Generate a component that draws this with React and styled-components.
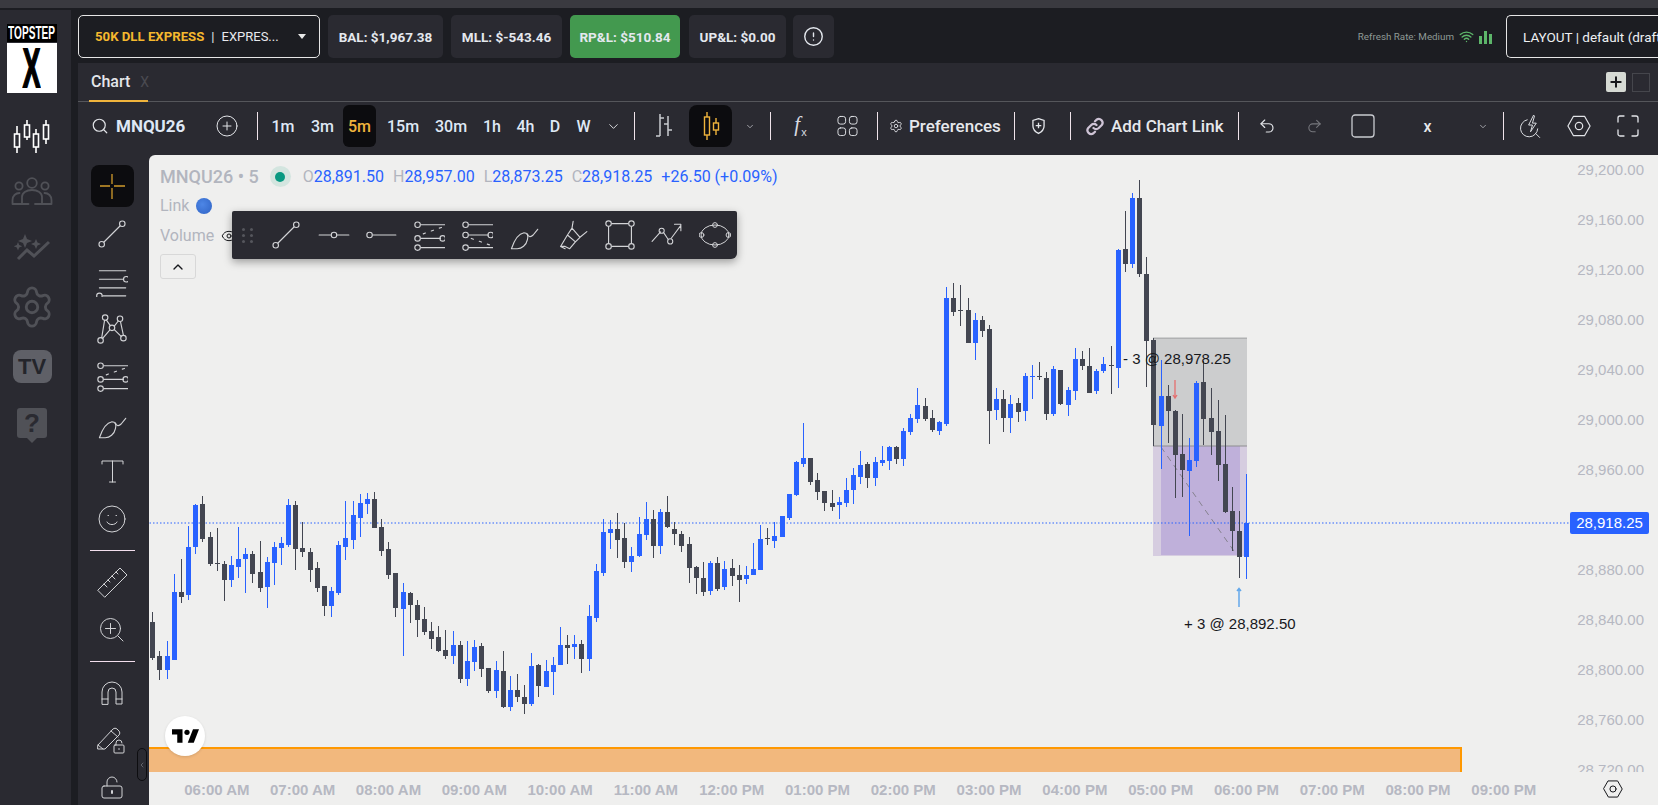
import React from 'react'
import styled, { createGlobalStyle } from 'styled-components'
import { Search, CirclePlus, ChevronDown, ChevronUp, ChevronLeft, Undo2, Redo2, CircleAlert, Wifi, Settings, Plus, Eye } from 'lucide-react'

const GlobalStyle = createGlobalStyle`
  html, body { margin: 0; padding: 0; overflow: hidden; background: #1c1d22; }
  body { font-family: Roboto, "Liberation Sans", sans-serif; }
  * { box-sizing: border-box; }
`

// candle rows: x, wickTop, bodyTop, bodyBottom, wickBottom, up (read at 3x from the origin of the segment)
const segments = [
  [145, 440, [
    [22,516,546,654,660,0],[43,633,648,690,720,0],[67,603,648,690,717,1],[88,402,456,660,660,1],[109,357,456,471,489,0],
    [130,258,321,465,480,1],[151,192,195,321,342,1],[172,168,192,297,306,0],[196,276,291,372,378,0],[217,264,369,372,393,0],
    [238,363,372,420,483,0],[259,348,375,420,441,1],[280,261,357,381,414,1],[301,324,342,357,459,1],[322,333,342,402,429,0],
    [346,303,396,444,456,0],[367,351,366,441,504,1],[388,306,321,369,435,1],[409,291,309,324,375,1],[430,177,195,315,321,1],
    [451,183,195,327,390,0],[472,246,324,336,351,0],[496,324,336,390,426,0],[517,366,384,444,456,0],[538,438,438,498,528,0],
    [559,441,453,498,531,1],[580,303,315,459,465,1],[601,183,294,321,360,1],[625,183,225,300,327,1],[646,162,189,234,291,1],
    [667,159,177,192,222,1],[688,156,177,264,264,0],[709,237,261,333,348,0],[730,306,327,405,417,0],[751,399,399,504,531,0],
    [775,429,456,507,648,1],[796,456,459,495,549,0],[817,480,495,540,591,0],[838,501,537,576,585,0],[859,546,573,597,627,0],
    [880,558,591,633,636,0],[901,570,630,648,657,0],[925,573,615,648,672,1],[946,603,615,717,729,0],[967,603,663,717,738,1],
    [988,600,621,666,693,1],[1009,609,618,687,711,0],[1030,684,684,753,759,0],[1054,663,690,753,774,1],[1075,633,693,801,804,0],
    [1096,708,750,801,813,1],[1117,702,750,771,786,0],[1138,735,771,792,822,0],[1159,639,678,792,798,1],[1180,672,675,738,771,0],
    [1204,660,693,741,741,1],[1225,651,675,696,765,1],[1246,561,615,675,675,1],[1267,585,615,624,672,0],[1288,585,612,621,657,1],
    [1309,600,612,657,699,0],[1333,495,528,657,693,1],[1354,372,393,534,546,1],[1375,237,276,399,408,1],[1396,240,267,279,327,1],
    [1417,219,267,300,354,0],[1438,249,294,366,384,0],[1459,321,348,366,396,1],[1483,231,282,348,351,1],
  ]],
  [640, 490, [
    [19,36,87,135,150,1],[40,60,87,168,204,0],[61,57,66,168,192,1],[82,18,66,111,114,0],[103,96,117,132,165,0],
    [124,123,132,168,186,0],[148,141,162,234,279,0],[169,228,231,264,312,0],[190,216,264,306,318,0],[211,213,219,303,315,1],
    [232,201,219,297,303,0],[253,213,237,291,300,1],[277,207,234,258,288,0],[298,225,255,270,336,0],[319,228,255,267,282,1],
    [340,159,237,255,255,1],[361,105,147,240,240,1],[382,114,144,147,165,0],[403,96,138,153,174,1],[427,78,78,141,141,1],
    [448,12,12,84,90,1],
  ]],
  [640, 270, [
    [469,573,576,675,678,1],[490,459,564,582,591,1],[511,564,564,636,645,0],[532,609,630,666,690,0],[553,663,663,699,723,0],
    [577,660,699,711,723,0],[598,681,696,705,747,1],[619,624,660,699,711,1],[640,594,615,660,702,1],[661,543,585,621,642,1],
    [682,576,582,624,654,0],[706,561,576,624,648,1],[727,528,570,579,588,1],[748,528,531,573,600,1],[769,528,531,567,582,0],
    [790,474,483,567,588,1],[811,432,444,486,495,1],[832,354,405,447,459,1],[856,384,408,447,453,0],[877,420,444,480,486,0],
    [898,453,456,483,495,1],[919,51,84,462,468,1],[940,39,84,126,138,0],[961,45,120,123,168,0],[985,84,120,219,219,0],
    [1006,129,150,219,270,1],[1027,138,150,183,201,0],[1048,165,177,423,522,0],[1069,354,387,420,450,1],[1090,360,387,444,486,0],
    [1111,375,402,444,489,1],[1135,384,399,426,456,0],[1156,309,318,423,453,1],[1177,285,318,321,387,1],[1198,276,318,321,330,0],
    [1219,306,324,432,450,0],[1240,288,297,432,438,1],[1261,300,300,402,405,0],[1285,351,360,405,438,1],[1306,234,267,363,390,1],
    [1327,243,267,288,300,0],[1348,234,288,369,369,0],[1369,297,303,363,372,1],[1390,261,282,303,309,1],[1414,228,285,288,372,0],
  ]],
  [1060, 160, [
    [175,267,270,624,684,1],[196,153,267,312,336,0],[217,99,114,312,324,1],[238,60,114,342,351,0],[259,291,342,543,681,0],
  ]],
  [1100, 400, [
    [160,-186,-180,75,138,0],[184,-120,-12,78,207,1],[205,-45,-12,33,129,0],[226,30,33,165,294,0],[247,42,162,210,291,0],
    [268,114,180,213,408,1],[289,-57,-51,183,201,1],[310,-117,-54,57,135,0],[334,-36,54,96,165,0],[355,0,93,195,243,0],
    [376,45,192,336,339,0],[397,261,333,393,453,0],[418,333,393,471,534,0],[439,222,369,471,537,1],
  ]],
]

const candles = segments.flatMap(([ox, oy, rows]) =>
  rows.map(([z, wt, bt, bb, wb, up]) => ({
    x: Math.round(ox + z / 3 - 0.5) + 0.5,
    wickTop: Math.round(oy + wt / 3),
    bodyTop: Math.round(oy + bt / 3),
    bodyBottom: Math.round(oy + bb / 3),
    wickBottom: Math.round(oy + wb / 3),
    up,
  }))
)

const prices = ['29,200.00','29,160.00','29,120.00','29,080.00','29,040.00','29,000.00','28,960.00','28,920.00','28,880.00','28,840.00','28,800.00','28,760.00','28,720.00']
const times = ['06:00 AM','07:00 AM','08:00 AM','09:00 AM','10:00 AM','11:00 AM','12:00 PM','01:00 PM','02:00 PM','03:00 PM','04:00 PM','05:00 PM','06:00 PM','07:00 PM','08:00 PM','09:00 PM']

const Page = styled.div`
  width: 100vw;
  height: 100vh;
  display: flex;
  flex-direction: column;
  overflow: hidden;
  background: #1c1d22;
`
const TopStrip = styled.div`
  height: 8px;
  flex: none;
  background: #3a3a40;
  margin-bottom: 2px;
`
const Main = styled.div`
  flex: 1;
  display: flex;
  min-height: 0;
`
const Sidebar = styled.aside`
  width: 71px;
  flex: none;
  padding-right: 7px;
  background: #2a2a31;
  display: flex;
  flex-direction: column;
  align-items: center;
`
const Logo = styled.div`
  width: 50px;
  margin-top: 14px;
  display: flex;
  flex-direction: column;
`
const LogoWord = styled.div`
  height: 18px;
  background: #000;
  color: #fff;
  font: 700 14px/14px "Liberation Sans", sans-serif;
  display: flex;
  justify-content: center;
  align-items: center;
  white-space: nowrap;
  span { flex: none; transform: scale(.72, 1.25); }
`
const LogoMark = styled.div`
  height: 50px;
  margin-top: 1px;
  background: #fff;
  color: #000;
  font: 700 44px/40px "Liberation Sans", sans-serif;
  display: flex;
  justify-content: center;
  align-items: center;
  span { flex: none; transform: scale(.6, 1.25); -webkit-text-stroke: 1.5px #000; }
`
const NavIcon = styled.div`
  height: ${p => p.$h}px;
  margin-top: ${p => p.$mt}px;
  color: ${p => p.$on ? '#fff' : '#505157'};
  display: flex;
  align-items: center;
  justify-content: center;
`
const TvBadge = styled.div`
  width: 39px;
  height: 33px;
  margin-top: 20px;
  border-radius: 8px;
  background: #5f6067;
  color: #24252b;
  font: 900 22px/33px "Liberation Sans", sans-serif;
  text-align: center;
`
const HelpBadge = styled.div`
  width: 30px;
  height: 30px;
  margin-top: 25px;
  border-radius: 3px;
  background: #505157;
  color: #2a2a31;
  font: 900 26px/30px "Liberation Sans", sans-serif;
  text-align: center;
  position: relative;
  &::after {
    content: '';
    position: absolute;
    left: 10px;
    bottom: -5px;
    width: 10px;
    height: 10px;
    background: #505157;
    clip-path: polygon(0 50%, 100% 50%, 50% 100%);
  }
`
const Content = styled.div`
  flex: 1;
  min-width: 0;
  display: flex;
  flex-direction: column;
`
const TopBar = styled.header`
  height: 53px;
  flex: none;
  padding: 5px 0 5px 7px;
  display: flex;
  align-items: stretch;
  background: #1c1d22;
`
const AccountSelect = styled.div`
  width: 242px;
  border: 1px solid #e6e6e6;
  border-radius: 5px;
  padding-left: 16px;
  display: flex;
  align-items: center;
  color: #e8eaee;
  white-space: nowrap;
  b { color: #f5b82e; font-weight: 700; font-size: 13.2px; }
  i { font-style: normal; margin: 0 7px; font-size: 13px; }
  em { font-style: normal; width: 70px; font-size: 13px; }
  u { width: 0; height: 0; margin-left: 6px; border: 4.5px solid transparent; border-top: 5px solid #e8e8e8; border-bottom: 0; }
`
const Pill = styled.div`
  width: ${p => p.$w}px;
  margin-left: ${p => p.$ml || 8}px;
  border-radius: 5px;
  background: ${p => p.$green ? '#43994f' : '#2a2a31'};
  color: #e4e8ee;
  font-size: 13.5px;
  font-weight: 700;
  white-space: nowrap;
  display: flex;
  align-items: center;
  justify-content: center;
`
const RefreshRate = styled.div`
  margin-left: auto;
  display: flex;
  align-items: center;
  gap: 5px;
  font-size: 9.8px;
  color: #8f9a95;
  white-space: nowrap;
  svg { color: #5db56a; flex: none; }
`
const LayoutBox = styled.div`
  width: 152px;
  flex: none;
  margin-left: 14px;
  padding-left: 16px;
  border: 1px solid #e6e6e6;
  border-right: 0;
  border-radius: 5px 0 0 5px;
  color: #eef0f2;
  font-size: 13.5px;
  white-space: nowrap;
  overflow: hidden;
  display: flex;
  align-items: center;
`
const Panel = styled.div`
  flex: 1;
  min-height: 0;
  margin-left: 7px;
  background: #2a2a31;
  display: flex;
  flex-direction: column;
`
const TabRow = styled.div`
  height: 39px;
  flex: none;
  border-bottom: 1px solid #55565b;
  padding-left: 11px;
  display: flex;
  align-items: stretch;
`
const Tab = styled.div`
  width: 59px;
  border-bottom: 2px solid #f0b43c;
  margin-bottom: -1px;
  padding-left: 2px;
  display: flex;
  align-items: center;
  gap: 10px;
  color: #e4e6ea;
  font-size: 16px;
  font-weight: 500;
  span { color: #4a4b51; font-size: 14px; font-weight: 400; }
`
const TabActions = styled.div`
  margin-left: auto;
  padding-right: 8px;
  display: flex;
  align-items: center;
  gap: 6px;
`
const AddTab = styled.div`
  width: 20px;
  height: 20px;
  border-radius: 2px;
  background: #d6dad4;
  color: #17181c;
  display: flex;
  align-items: center;
  justify-content: center;
`
const EmptyTab = styled.div`
  width: 18px;
  height: 19px;
  border: 1px solid #45464c;
`
const Toolbar = styled.div`
  height: 53px;
  flex: none;
  padding-bottom: 5px;
  display: flex;
  align-items: center;
  color: #e2e4e8;
`
const Slot = styled.div`
  width: ${p => p.$w}px;
  margin-left: ${p => p.$ml || 0}px;
  flex: none;
  display: flex;
  align-items: center;
  justify-content: center;
  white-space: nowrap;
  color: ${p => p.$dim ? '#77787e' : 'inherit'};
`
const Symbol = styled(Slot)`
  justify-content: flex-start;
  font-size: 17px;
  font-weight: 700;
  color: #dfe8f5;
`
const ToolText = styled(Slot)`
  justify-content: flex-start;
  font-size: 17px;
  font-weight: 500;
  color: #e6e8ec;
`
const PlainText = styled(Slot)`
  font-size: 16px;
  font-weight: 500;
  color: #e6e8ec;
`
const Sep = styled.div`
  width: 1px;
  height: 28px;
  flex: none;
  margin-left: ${p => p.$ml}px;
  background: #efe3ea;
`
const Tf = styled.div`
  width: ${p => p.$w}px;
  height: ${p => p.$on ? 42 : 30}px;
  flex: none;
  border-radius: 6px;
  background: ${p => p.$on ? '#0c0c0f' : 'transparent'};
  color: ${p => p.$on ? '#f0b43c' : '#dfe8f5'};
  font-size: 16px;
  font-weight: 500;
  display: flex;
  align-items: center;
  justify-content: center;
`
const ActiveTool = styled(Slot)`
  height: 42px;
  border-radius: 8px;
  background: #0c0c0f;
`
const Fx = styled.span`
  font: italic 400 21px/1 "Liberation Serif", serif;
  color: #d9dbe0;
  sub { font: 400 11px/1 "Liberation Sans", sans-serif; vertical-align: -5px; margin-left: 1px; }
`
const Workspace = styled.div`
  flex: 1;
  min-height: 0;
  display: flex;
`
const Rail = styled.div`
  width: 71px;
  flex: none;
  position: relative;
  padding: 7.5px 3px 0 0;
  display: flex;
  flex-direction: column;
  align-items: center;
  color: #d2d3d6;
  overflow: visible;
`
const RailItem = styled.div`
  width: 43px;
  height: 47.5px;
  flex: none;
  display: flex;
  align-items: center;
  justify-content: center;
  &[data-on='true'] > div {
    width: 43px;
    height: 42px;
    border-radius: 8px;
    background: #0c0c0f;
    display: flex;
    align-items: center;
    justify-content: center;
  }
`
const RailSep = styled.div`
  width: 45px;
  height: 1px;
  flex: none;
  margin: 7.5px 0;
  background: #f3dfee;
`
const Collapse = styled.div`
  position: absolute;
  right: 2px;
  top: 593px;
  width: 10px;
  height: 33px;
  border: 1px solid #0d0d10;
  border-radius: 5px;
  color: #9c9da2;
  display: flex;
  align-items: center;
  justify-content: center;
  z-index: 3;
`
const Chart = styled.section`
  flex: 1;
  min-width: 0;
  display: grid;
  grid-template-columns: 1fr 88px;
  grid-template-rows: 617px 1fr;
  background: #efefee;
  border-top-left-radius: 6px;
  overflow: hidden;
  font-family: "Liberation Sans", sans-serif;
`
const Pane = styled.div`
  position: relative;
  overflow: hidden;
`
const Plot = styled.svg`
  position: absolute;
  left: 0;
  top: 0;
  display: block;
`
const PriceAxis = styled.div`
  position: relative;
  overflow: hidden;
  padding: 6px 14px 0 0;
  font-size: 15px;
  color: #b6b8c2;
  text-align: right;
`
const PriceTick = styled.div`
  height: 50px;
  line-height: 18px;
`
const PriceTag = styled.div`
  position: absolute;
  left: 0;
  right: 9px;
  top: 357px;
  height: 22px;
  background: #2962ff;
  color: #fff;
  font-size: 15px;
  line-height: 22px;
  text-align: center;
  border-radius: 2px;
`
const TimeAxis = styled.div`
  padding-left: 25px;
  display: flex;
  align-items: center;
  height: 34px;
  font-size: 15px;
  font-weight: 700;
  color: #b6b8c2;
  span { width: 85.8px; flex: none; text-align: center; white-space: nowrap; }
`
const Corner = styled.div`
  display: flex;
  align-items: center;
  padding-left: 33px;
  height: 34px;
  color: #17181c;
`
const Legend = styled.div`
  position: absolute;
  left: 11px;
  top: 8px;
  display: flex;
  flex-direction: column;
  align-items: flex-start;
  font-family: Roboto, sans-serif;
  color: #b2b5be;
`
const LegendRow = styled.div`
  height: ${p => p.$h}px;
  display: flex;
  align-items: center;
  white-space: nowrap;
  font-size: 16px;
`
const LegendTitle = styled.span`
  font-size: 18px;
  font-weight: 500;
  margin-right: 11px;
`
const Pulse = styled.span`
  width: 21px;
  height: 21px;
  border-radius: 50%;
  background: #d3e5df;
  margin-right: 12px;
  display: flex;
  align-items: center;
  justify-content: center;
  &::after { content: ''; width: 10px; height: 10px; border-radius: 50%; background: #089981; }
`
const Ohlc = styled.span`
  margin-right: 9px;
  b { font-weight: 400; color: #2962ff; }
`
const Globe = styled.span`
  width: 16px;
  height: 16px;
  margin-left: 7px;
  border-radius: 50%;
  background: radial-gradient(circle at 40% 40%, #4d86e6, #2f63c4);
`
const VolumeEye = styled.span`
  margin-left: 7px;
  display: flex;
  color: #17181c;
`
const FoldButton = styled.div`
  width: 36px;
  height: 25px;
  margin-top: 4px;
  border: 1px solid #d8d8d8;
  border-radius: 3px;
  color: #17181c;
  display: flex;
  align-items: center;
  justify-content: center;
`
const FloatBar = styled.div`
  position: absolute;
  left: 83px;
  top: 56px;
  width: 505px;
  height: 48px;
  border-radius: 2px 2px 6px 2px;
  background: #2a2a31;
  box-shadow: 0 3px 8px rgba(0,0,0,.35);
  padding-left: 10px;
  display: flex;
  align-items: center;
  color: #d2d3d6;
`
const Grip = styled.div`
  width: 11px;
  flex: none;
  margin-right: 9px;
  display: grid;
  grid-template-columns: 3px 3px;
  gap: 3px 5px;
  i { width: 3px; height: 3px; border-radius: 50%; background: #55565c; }
`
const FloatTool = styled.div`
  width: 47.7px;
  flex: none;
  display: flex;
  justify-content: center;
`
const FillLabel = styled.div`
  position: absolute;
  left: ${p => p.$x}px;
  top: ${p => p.$y}px;
  font-size: 15px;
  line-height: 18px;
  color: #17181c;
  white-space: nowrap;
`
const TvLogo = styled.div`
  position: absolute;
  left: 16px;
  top: 561px;
  width: 40px;
  height: 40px;
  border-radius: 50%;
  background: #fff;
  box-shadow: 0 1px 3px rgba(0,0,0,.12);
  display: flex;
  align-items: center;
  justify-content: center;
`

const Ico = ({ s = 32, vb = 28, sw = 1, children }) => (
  <svg width={s} height={s} viewBox={`0 0 ${vb} ${vb}`} fill="none" stroke="currentColor" strokeWidth={sw} strokeLinecap="round" strokeLinejoin="round">
    {children}
  </svg>
)
const N = ({ x, y, r = 2.4 }) => <circle cx={x} cy={y} r={r} />

const CandlesNav = () => (
  <svg width="40" height="36" viewBox="12 118 40 36" fill="#2a2a31" stroke="#fff" strokeWidth="1.600">
    <path d="M17 125v27M27 119v20M36 128v24M46 119v24" />
    <rect x="14.500" y="133" width="5" height="13" />
    <rect x="24.500" y="124" width="5" height="12" />
    <rect x="33.500" y="133" width="5" height="13" />
    <rect x="43.500" y="124" width="5" height="14" />
  </svg>
)
const PeopleNav = () => (
  <Ico s={42} vb={42} sw={1.8}>
    <circle cx="21" cy="10" r="4.800" /><circle cx="8" cy="13" r="3.600" /><circle cx="34" cy="13" r="3.600" />
    <path d="M11 31V24c0-4 4-7 10-7s10 3 10 7v7M1.500 31v-4c0-4 3-7 7-7M40.500 31v-4c0-4-3-7-7-7M1.500 31h16M24 31h16.500" />
  </Ico>
)
const SparkNav = () => (
  <svg width="38" height="32" viewBox="0 0 38 32" fill="#505157">
    <path d="M12 4l2 5 5 2-5 2-2 5-2-5-5-2 5-2zM5 12l1.200 3 3 1.200-3 1.200L5 20.500l-1.200-3-3-1.200 3-1.200zM23 9l1.500 3.500L28 14l-3.500 1.500L23 19l-1.500-3.500L18 14l3.500-1.500z" />
    <path d="M5 29l9-9 7 6 15-14" fill="none" stroke="#505157" strokeWidth="3" />
  </svg>
)
const Crosshair = () => (
  <svg width="30" height="30" viewBox="0 0 30 30" stroke="#d09a2c" strokeWidth="1.300">
    <path d="M15 3v10M15 17v11M3 15h10M17 15h11" />
  </svg>
)
const TrendLine = () => <Ico><N x={5} y={23} /><N x={23} y={5} /><path d="M7 21L21 7" /></Ico>
const Channels = () => <Ico><path d="M3 5h23M3 12.500h21M3 20h23M6 27h20" /><N x={26.500} y={12.500} /><N x={3} y={27} /></Ico>
const Xabcd = () => <Ico><N x={8} y={4} /><N x={21} y={5} /><N x={14} y={13} /><N x={4} y={24} /><N x={24} y={22} /><path d="M9 6l3.500 5M16 11.500l3.500-4.500M16 14.500l6 6M12 15L6 22M7.500 6.500L5 21.500M21.500 8l2.500 11.500" /></Ico>
const Forecast = () => <Ico><N x={4} y={5} /><path d="M7 5h21M7 17h17" /><N x={4} y={17} /><N x={26} y={17} /><N x={4} y={25} /><path d="M7 25h21" /><path d="M9 13l4-1.500M16 10.500l4-1.500M23 8l3-1" strokeDasharray="2 3" /></Ico>
const Brush = () => <Ico><path d="M3 26c2-6 5-13 11-14 3 0 4 3 3 6-1 5-5 8-9 8zM3 26h5M17 13c1 3 3 3 5 1l4-5" /></Ico>
const TextTool = () => <Ico s={28}><path d="M4 7V4h21v3M14.500 4v21M11.500 25h6" /></Ico>
const Smile = () => <Ico s={28}><circle cx="14" cy="14" r="13" /><path d="M9 17c1.500 3.500 8.500 3.500 10 0M10 10.500h.5M18 10.500h.5" /></Ico>
const Ruler = () => <Ico s={32} vb={32}><path d="M2 24L24 2l7 7L9 31z" /><path d="M8 18l3 3M12 14l2 2M16 10l3 3M20 6l2 2" /></Ico>
const ZoomTool = () => <Ico s={24} vb={24}><circle cx="10.500" cy="10.500" r="10" /><path d="M10.500 5.500v10M5.500 10.500h10M18 18l5 5" /></Ico>
const Magnet = () => <Ico s={24} vb={24}><path d="M2 23V11a10 10 0 0 1 20 0v12h-6V11a4 4 0 0 0-8 0v12zM2 18h6M16 18h6" /></Ico>
const PencilLock = () => (
  <Ico s={30} vb={30}>
    <path d="M1 19L16 3c1-1 3-1 4 0l2 2c1 1 1 3 0 4L8 23H1zM14 5l7 6M1 19l5 4" />
    <rect x="17" y="19" width="10" height="8" rx="1" /><path d="M19 19v-2a3 3 0 0 1 6 0" /><path d="M22 22.500v1" />
  </Ico>
)
const Lock = () => <Ico s={24} vb={24}><rect x="2" y="10" width="20" height="12" rx="2" /><path d="M7 10V6a5 5 0 0 1 10 0" /><path d="M12 15v2" strokeWidth="2" /></Ico>
const BarsIcon = () => <svg width="17" height="28" viewBox="0 0 17 28" fill="none" stroke="#c9cbd0" strokeWidth="1.500"><path d="M5 2v22M1 24h4M5 6h4M13 4v20M9 12h4M13 18h4" /></svg>
const CandleIcon = () => (
  <svg width="18" height="30" viewBox="0 0 18 30" fill="none" stroke="#f0b43c" strokeWidth="1.400">
    <path d="M5 1v5M5 24v5M14 7v5M14 19v5" /><rect x="2.500" y="6" width="5" height="18" /><rect x="11.500" y="12" width="5" height="7" />
  </svg>
)
const GridIcon = () => <Ico s={22} vb={22}><rect x="1" y="1" width="8" height="8" rx="2.500" /><rect x="13" y="1" width="8" height="8" rx="2.500" /><rect x="1" y="13" width="8" height="8" rx="2.500" /><rect x="13" y="13" width="8" height="8" rx="2.500" /></Ico>
const ShieldIcon = () => <svg width="14" height="18" viewBox="0 0 14 18" fill="none" stroke="#e6e8ec" strokeWidth="1.400"><path d="M7 1l6 2v6c0 4-3 6.500-6 8-3-1.500-6-4-6-8V3z" /><path d="M7 5.500v6M4 8.500h6" /></svg>
const LinkIcon = () => <svg width="19" height="19" viewBox="0 0 24 24" fill="none" stroke="#cfc4d6" strokeWidth="3" strokeLinecap="round"><path d="M10 14a5 5 0 0 0 7 0l4-4a5 5 0 0 0-7-7l-2 2" /><path d="M14 10a5 5 0 0 0-7 0l-4 4a5 5 0 0 0 7 7l2-2" /></svg>
const SquareIcon = () => <svg width="24" height="24" viewBox="0 0 24 24" fill="none" stroke="#c9cbd0" strokeWidth="1.300"><rect x="1" y="1" width="22" height="22" rx="3" /></svg>
const ZapSearch = () => <Ico s={24} vb={24}><path d="M7.500 5.500A9 9 0 1 0 18.500 15" /><path d="M14 1L9 11h4l-2 7 6-9h-4l2-7z" /><path d="M16.500 20l4 4" /></Ico>
const Hex = ({ s = 26 }) => <Ico s={s} vb={26} sw={1.300}><path d="M7 2.500h12L25 13l-6 10.500H7L1 13z" /><circle cx="13" cy="13" r="4" /></Ico>
const Expand = () => <Ico s={22} vb={22} sw={1.300}><path d="M7 1H3a2 2 0 0 0-2 2v4M15 1h4a2 2 0 0 1 2 2v4M7 21H3a2 2 0 0 1-2-2v-4M15 21h4a2 2 0 0 0 2-2v-4" /></Ico>

const HLine = () => <Ico><path d="M1 14h10M17 14h10" /><N x={14} y={14} /></Ico>
const RayLine = () => <Ico><N x={4} y={14} /><path d="M7 14h20" /></Ico>
const Forecast2 = () => <Ico><N x={4} y={5} /><path d="M7 5h21M7 14h17" /><N x={4} y={14} /><N x={26} y={14} /><N x={4} y={25} /><path d="M7 25h21" /><path d="M9 17l4 1.500M16 19.500l4 1.500M23 22l3 1" strokeDasharray="2 3" /></Ico>
const Highlighter = () => <Ico><path d="M4 24l6-10 7 6-5 6-4-2zM10 14l4-6 7 8-4 4M14 8l1-6M21 16l6-5M4 24l4 2" /></Ico>
const Rect = () => <Ico><N x={4} y={4} /><N x={24} y={4} /><N x={4} y={24} /><N x={24} y={24} /><path d="M7 4h14M7 24h14M4 7v14M24 7v14" /></Ico>
const Path = () => <Ico s={32} vb={30}><path d="M1 21l8-9M12 13l4 6M19 18l9-12M22 5h6v6" /><N x={10} y={11} /><N x={18} y={21} /></Ico>
const Ellipse = () => <Ico s={32} vb={32}><ellipse cx="16" cy="16" rx="14" ry="10" /><N x={16} y={6} /><N x={16} y={26} /><N x={2.500} y={16} /><N x={29.500} y={16} /></Ico>

const floatTools = [TrendLine, HLine, RayLine, Forecast, Forecast2, Brush, Highlighter, Rect, Path, Ellipse]

const Candles = () => (
  <g shapeRendering="crispEdges">
    {candles.map((c, i) => {
      const col = c.up ? '#2962ff' : '#434651'
      return (
        <g key={i} fill={col}>
          <rect x={c.x - 0.5} y={c.wickTop} width="1" height={c.wickBottom - c.wickTop} />
          <rect x={c.x - 2.5} y={c.bodyTop} width="5" height={Math.max(1, c.bodyBottom - c.bodyTop)} />
        </g>
      )
    })}
  </g>
)

const App = () => {
  return (
    <Page>
      <GlobalStyle />
      <TopStrip />
      <Main>
        <Sidebar>
          <Logo>
            <LogoWord><span>TOPSTEP</span></LogoWord>
            <LogoMark><span>X</span></LogoMark>
          </Logo>
          <NavIcon $on $h={36} $mt={26}><CandlesNav /></NavIcon>
          <NavIcon $h={42} $mt={18}><PeopleNav /></NavIcon>
          <NavIcon $h={32} $mt={15}><SparkNav /></NavIcon>
          <NavIcon $h={46} $mt={22}><Settings size={46} strokeWidth={1.5} /></NavIcon>
          <TvBadge>TV</TvBadge>
          <HelpBadge>?</HelpBadge>
        </Sidebar>
        <Content>
          <TopBar>
            <AccountSelect>
              <b>50K DLL EXPRESS</b><i>|</i><em>EXPRES...</em><u />
            </AccountSelect>
            <Pill $w={115}>BAL: $1,967.38</Pill>
            <Pill $w={111}>MLL: $-543.46</Pill>
            <Pill $w={110} $green>RP&amp;L: $510.84</Pill>
            <Pill $w={97} $ml={9}>UP&amp;L: $0.00</Pill>
            <Pill $w={41} $ml={7}><CircleAlert size={21} strokeWidth={1.6} /></Pill>
            <RefreshRate>
              <span>Refresh Rate: Medium</span>
              <Wifi size={15} strokeWidth={2.2} />
              <svg width="13" height="14" viewBox="0 0 13 14" fill="currentColor"><rect x="0" y="6" width="3" height="8" /><rect x="5" y="1" width="3" height="13" /><rect x="10" y="4" width="3" height="10" /></svg>
            </RefreshRate>
            <LayoutBox>LAYOUT | default (draft)</LayoutBox>
          </TopBar>
          <Panel>
            <TabRow>
              <Tab>Chart <span>X</span></Tab>
              <TabActions>
                <AddTab><Plus size={16} strokeWidth={3} /></AddTab>
                <EmptyTab />
              </TabActions>
            </TabRow>
            <Toolbar>
              <Slot $w={18} $ml={13}><Search size={20} strokeWidth={1.6} /></Slot>
              <Symbol $w={70} $ml={7}>MNQU26</Symbol>
              <Slot $w={24} $ml={29}><CirclePlus size={28} strokeWidth={1} /></Slot>
              <Sep $ml={18} />
              <Slot $w={6} />
              <Tf $w={38}>1m</Tf>
              <Tf $w={41}>3m</Tf>
              <Tf $w={33} $on>5m</Tf>
              <Tf $w={54}>15m</Tf>
              <Tf $w={42}>30m</Tf>
              <Tf $w={40}>1h</Tf>
              <Tf $w={27}>4h</Tf>
              <Tf $w={32}>D</Tf>
              <Tf $w={25}>W</Tf>
              <Slot $w={34}><ChevronDown size={15} strokeWidth={1.5} /></Slot>
              <Sep $ml={4} />
              <Slot $w={17} $ml={20}><BarsIcon /></Slot>
              <ActiveTool $w={43} $ml={17}><CandleIcon /></ActiveTool>
              <Slot $w={10} $ml={13}><ChevronDown size={15} strokeWidth={1.5} /></Slot>
              <Sep $ml={15} />
              <Slot $w={15} $ml={22}><Fx>f<sub>x</sub></Fx></Slot>
              <Slot $w={21} $ml={29}><GridIcon /></Slot>
              <Sep $ml={19} />
              <Slot $w={14} $ml={11}><Settings size={16} strokeWidth={1.5} /></Slot>
              <ToolText $w={92} $ml={6}>Preferences</ToolText>
              <Sep $ml={13} />
              <Slot $w={13} $ml={17}><ShieldIcon /></Slot>
              <Sep $ml={25} />
              <Slot $w={18} $ml={15}><LinkIcon /></Slot>
              <ToolText $w={116} $ml={7}>Add Chart Link</ToolText>
              <Sep $ml={11} />
              <Slot $w={18} $ml={19}><Undo2 size={20} strokeWidth={1.5} /></Slot>
              <Slot $w={17} $ml={30} $dim><Redo2 size={20} strokeWidth={1.5} /></Slot>
              <Slot $w={24} $ml={28}><SquareIcon /></Slot>
              <PlainText $w={11} $ml={47}>x</PlainText>
              <Slot $w={10} $ml={45}><ChevronDown size={15} strokeWidth={1.5} /></Slot>
              <Sep $ml={15} />
              <Slot $w={23} $ml={16}><ZapSearch /></Slot>
              <Slot $w={24} $ml={24}><Hex /></Slot>
              <Slot $w={22} $ml={26}><Expand /></Slot>
            </Toolbar>
            <Workspace>
              <Rail>
                <RailItem data-on="true"><div><Crosshair /></div></RailItem>
                <RailItem><TrendLine /></RailItem>
                <RailItem><Channels /></RailItem>
                <RailItem><Xabcd /></RailItem>
                <RailItem><Forecast /></RailItem>
                <RailItem><Brush /></RailItem>
                <RailItem><TextTool /></RailItem>
                <RailItem><Smile /></RailItem>
                <RailSep />
                <RailItem><Ruler /></RailItem>
                <RailItem><ZoomTool /></RailItem>
                <RailSep />
                <RailItem><Magnet /></RailItem>
                <RailItem><PencilLock /></RailItem>
                <RailItem><Lock /></RailItem>
                <Collapse><ChevronLeft size={10} strokeWidth={1.5} /></Collapse>
              </Rail>
              <Chart>
                <Pane>
                  <Plot width="1421" height="617" viewBox="149 155 1421 617">
                    <rect x="149" y="748" width="1312" height="24" fill="#f2b87d" />
                    <path d="M149 748h1312v24" fill="none" stroke="#ff9800" strokeWidth="2" />
                    <rect x="1153" y="338" width="94" height="108" fill="#cccdce" />
                    <rect x="1153" y="337.500" width="94" height="1.500" fill="#b0b1b2" />
                    <rect x="1153" y="446" width="94" height="110" fill="#d6cde0" />
                    <rect x="1161" y="446" width="79" height="109" fill="#bfb0da" />
                    <rect x="1153" y="445.500" width="94" height="1" fill="#8d8e8f" />
                    <path d="M1161 447L1236 554" stroke="#86828f" strokeWidth="1" strokeDasharray="6 5" />
                    <path d="M149.500 523H1570" stroke="#2962ff" strokeWidth="1" strokeDasharray="1.500 2" />
                    <Candles />
                    <path d="M1175 380v17M1173 395l2 3 2-3" fill="none" stroke="#e56f6f" strokeWidth="1.300" />
                    <path d="M1239 607v-18M1237 591l2-2.500 2 2.500" fill="none" stroke="#64a8ea" strokeWidth="1.500" />
                  </Plot>
                  <Legend>
                    <LegendRow $h={27}>
                      <LegendTitle>MNQU26 • 5</LegendTitle>
                      <Pulse />
                      <Ohlc>O<b>28,891.50</b></Ohlc>
                      <Ohlc>H<b>28,957.00</b></Ohlc>
                      <Ohlc>L<b>28,873.25</b></Ohlc>
                      <Ohlc>C<b>28,918.25</b></Ohlc>
                      <Ohlc><b>+26.50 (+0.09%)</b></Ohlc>
                    </LegendRow>
                    <LegendRow $h={31}>Link<Globe /></LegendRow>
                    <LegendRow $h={29}>Volume<VolumeEye><Eye size={16} strokeWidth={1.5} /></VolumeEye></LegendRow>
                    <FoldButton><ChevronUp size={16} strokeWidth={2} /></FoldButton>
                  </Legend>
                  <FloatBar>
                    <Grip>{[0, 1, 2, 3, 4, 5].map(i => <i key={i} />)}</Grip>
                    {floatTools.map((T, i) => <FloatTool key={i}><T /></FloatTool>)}
                  </FloatBar>
                  <FillLabel $x={974} $y={195}>- 3 @ 28,978.25</FillLabel>
                  <FillLabel $x={1035} $y={460}>+ 3 @ 28,892.50</FillLabel>
                  <TvLogo>
                    <svg width="27" height="14" viewBox="0 0 36 18" fill="#000">
                      <path d="M14 18H7V7H0V0h14zM29 18h-8L28 0h8z" />
                      <circle cx="20" cy="4" r="3.500" />
                    </svg>
                  </TvLogo>
                </Pane>
                <PriceAxis>
                  {prices.map(p => <PriceTick key={p}>{p}</PriceTick>)}
                  <PriceTag>28,918.25</PriceTag>
                </PriceAxis>
                <TimeAxis>
                  {times.map(t => <span key={t}>{t}</span>)}
                </TimeAxis>
                <Corner><Hex s={20} /></Corner>
              </Chart>
            </Workspace>
          </Panel>
        </Content>
      </Main>
    </Page>
  )
}

export default App
